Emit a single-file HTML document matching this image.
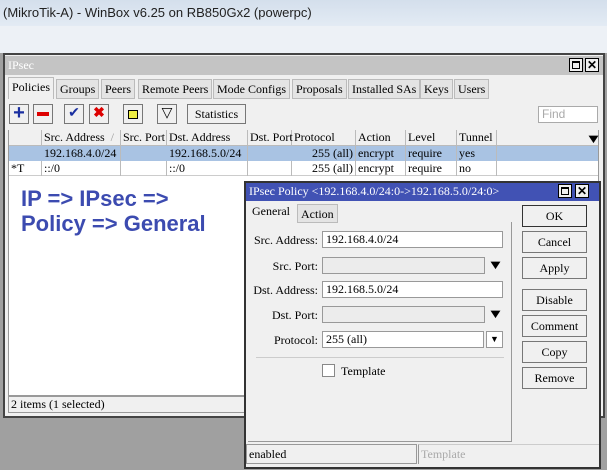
<!DOCTYPE html>
<html><head><style>
*{box-sizing:border-box;margin:0;padding:0}
body{width:607px;height:470px;overflow:hidden;background:#a0a0a0;font-family:"Liberation Serif",serif;font-size:12px;color:#000;position:relative}
.a{position:absolute}
.top{left:0;top:0;width:607px;height:26px;background:linear-gradient(#d4dfec,#e3ebf4)}
.top2{left:0;top:26px;width:607px;height:27px;background:#edf1f6}
.win{left:3px;top:53px;width:602px;height:365px;background:#f0f0f0;border:2px solid #444}
.tb{height:19px;background:#c4c4c4}
.btn{background:#f0f0f0;border:1px solid #777;text-align:center}
.tab{top:79px;height:20px;border:1px solid #bbb;background:#e4e4e4;padding:2px 3px 0;white-space:nowrap}
.cell{top:0;height:15px;border-right:1px solid #bbb;padding-left:2px;white-space:nowrap;line-height:15px}
.in{background:#fff;border:1px solid #999;height:17px;padding-left:3px;line-height:15px;font-size:12px}
.lab{width:90px;text-align:right;left:228px}
.db{left:522px;width:65px;height:22px;line-height:20px;border:1px solid #777;background:#f0f0f0;text-align:center}
.arr{font-size:13px;transform:scaleX(1.3)}
</style></head><body>
<div class="a top"></div>
<div class="a top2"></div>
<div class="a" style="left:3px;top:5px;font-family:'Liberation Sans',sans-serif;font-size:13px;color:#222">(MikroTik-A) - WinBox v6.25 on RB850Gx2 (powerpc)</div>
<div class="a win"></div>
<div class="a tb" style="left:5px;top:56px;width:598px"></div>
<div class="a" style="left:8px;top:58px;color:#fff">IPsec</div>
<div class="a btn" style="left:569px;top:58px;width:14px;height:14px;border:1px solid #000"><div style="margin:2px;width:8px;height:8px;border:1px solid #000;border-top-width:2px"></div></div>
<div class="a btn" style="left:585px;top:58px;width:14px;height:14px;border:1px solid #000;line-height:12px;font-weight:bold;font-family:'Liberation Sans'">✕</div>
<div class="a tab" style="left:8px;top:77px;height:22px;background:#f0f0f0;border-bottom:none">Policies</div>
<div class="a tab" style="left:56px">Groups</div>
<div class="a tab" style="left:101px">Peers</div>
<div class="a tab" style="left:138px">Remote Peers</div>
<div class="a tab" style="left:213px">Mode Configs</div>
<div class="a tab" style="left:292px">Proposals</div>
<div class="a tab" style="left:348px">Installed SAs</div>
<div class="a tab" style="left:420px">Keys</div>
<div class="a tab" style="left:454px">Users</div>
<div class="a btn" style="left:9px;top:104px;width:20px;height:20px;color:#1a2fa0;font-weight:bold;font-size:20px;line-height:17px;font-family:'Liberation Sans'">+</div>
<div class="a btn" style="left:33px;top:104px;width:20px;height:20px"><div style="margin:7px 3px;height:4px;background:#d00"></div></div>
<div class="a btn" style="left:64px;top:104px;width:20px;height:20px;color:#1a2fa0;font-size:14px;line-height:18px">✔</div>
<div class="a btn" style="left:89px;top:104px;width:20px;height:20px;color:#d00;font-size:14px;line-height:18px;font-weight:bold">✖</div>
<div class="a btn" style="left:123px;top:104px;width:20px;height:20px"><div style="margin:5px 4px;height:9px;background:#ee4;border:1px solid #000"></div></div>
<div class="a btn" style="left:157px;top:104px;width:20px;height:20px;font-size:14px;line-height:18px">▽</div>
<div class="a btn" style="left:187px;top:104px;width:59px;height:20px;line-height:18px">Statistics</div>
<div class="a" style="left:538px;top:106px;width:60px;height:17px;background:#fff;border:1px solid #aaa;color:#aaa;font-family:'Liberation Sans';font-size:12px;padding-left:3px">Find</div>
<div class="a" style="left:8px;top:130px;width:591px;height:266px;background:#fff;border:1px solid #999"></div>
<div class="a" style="left:9px;top:130px;width:589px;height:16px;background:#f0f0f0;border-bottom:1px solid #bbb">
<div class="a cell" style="left:0;width:33px"></div>
<div class="a cell" style="left:33px;width:79px">Src. Address &nbsp;<span style="color:#999">/</span></div>
<div class="a cell" style="left:112px;width:46px">Src. Port</div>
<div class="a cell" style="left:158px;width:81px">Dst. Address</div>
<div class="a cell" style="left:239px;width:44px">Dst. Port</div>
<div class="a cell" style="left:283px;width:64px">Protocol</div>
<div class="a cell" style="left:347px;width:50px">Action</div>
<div class="a cell" style="left:397px;width:51px">Level</div>
<div class="a cell" style="left:448px;width:40px">Tunnel</div>
<div class="a arr" style="left:578px;top:1px">▼</div>
</div>
<div class="a" style="left:9px;top:146px;width:589px;height:15px;background:#a9c3e3">
<div class="a cell" style="left:33px;width:79px">192.168.4.0/24</div>
<div class="a cell" style="left:158px;width:81px">192.168.5.0/24</div>
<div class="a cell" style="left:283px;width:64px;text-align:right;padding-right:2px">255 (all)</div>
<div class="a cell" style="left:347px;width:50px">encrypt</div>
<div class="a cell" style="left:397px;width:51px">require</div>
<div class="a cell" style="left:448px;width:40px">yes</div>
</div>
<div class="a" style="left:9px;top:161px;width:589px;height:15px;border-bottom:1px solid #ccc">
<div class="a cell" style="left:0;width:33px">*T</div>
<div class="a cell" style="left:33px;width:79px">::/0</div>
<div class="a cell" style="left:112px;width:46px"></div>
<div class="a cell" style="left:158px;width:81px">::/0</div>
<div class="a cell" style="left:239px;width:44px"></div>
<div class="a cell" style="left:283px;width:64px;text-align:right;padding-right:2px">255 (all)</div>
<div class="a cell" style="left:347px;width:50px">encrypt</div>
<div class="a cell" style="left:397px;width:51px">require</div>
<div class="a cell" style="left:448px;width:40px">no</div>
</div>
<div class="a" style="left:21px;top:186px;color:#3c4bb0;font-family:'Liberation Sans',sans-serif;font-weight:bold;font-size:22px;line-height:25px">IP =&gt; IPsec =&gt;<br>Policy =&gt; General</div>
<div class="a" style="left:8px;top:396px;width:591px;height:17px;border:1px solid #999;background:#f0f0f0;padding-left:2px;line-height:15px">2 items (1 selected)</div>

<div class="a" style="left:244px;top:181px;width:357px;height:288px;background:#f0f0f0;border:2px solid #333"></div>
<div class="a" style="left:246px;top:183px;width:353px;height:18px;background:#4152b4;color:#fff;padding-left:3px;line-height:17px">IPsec Policy &lt;192.168.4.0/24:0-&gt;192.168.5.0/24:0&gt;</div>
<div class="a btn" style="left:558px;top:184px;width:14px;height:14px;border:1px solid #000"><div style="margin:2px;width:8px;height:8px;border:1px solid #000;border-top-width:2px"></div></div>
<div class="a btn" style="left:575px;top:184px;width:14px;height:14px;border:1px solid #000;line-height:12px;font-weight:bold;font-family:'Liberation Sans'">✕</div>
<div class="a" style="left:248px;top:222px;width:264px;height:220px;border-right:1px solid #999;border-bottom:1px solid #999"></div>
<div class="a" style="left:252px;top:204px">General</div>
<div class="a tab" style="left:297px;top:204px;height:19px">Action</div>
<div class="a lab" style="top:233px">Src. Address:</div>
<div class="a in" style="left:322px;top:231px;width:181px">192.168.4.0/24</div>
<div class="a lab" style="top:259px">Src. Port:</div>
<div class="a in" style="left:322px;top:257px;width:163px;background:#ececec"></div>
<div class="a arr" style="left:489px;top:257px">▼</div>
<div class="a lab" style="top:283px">Dst. Address:</div>
<div class="a in" style="left:322px;top:281px;width:181px">192.168.5.0/24</div>
<div class="a lab" style="top:308px">Dst. Port:</div>
<div class="a in" style="left:322px;top:306px;width:163px;background:#ececec"></div>
<div class="a arr" style="left:489px;top:306px">▼</div>
<div class="a lab" style="top:333px">Protocol:</div>
<div class="a in" style="left:322px;top:331px;width:162px">255 (all)</div>
<div class="a in" style="left:486px;top:331px;width:17px;font-size:9px;text-align:center;padding:0">▼</div>
<div class="a" style="left:256px;top:357px;width:248px;border-top:1px solid #ccc"></div>
<div class="a" style="left:322px;top:364px;width:13px;height:13px;background:#fff;border:1px solid #888"></div>
<div class="a" style="left:341px;top:364px">Template</div>
<div class="a db" style="top:205px;border-color:#333">OK</div>
<div class="a db" style="top:231px">Cancel</div>
<div class="a db" style="top:257px">Apply</div>
<div class="a db" style="top:289px">Disable</div>
<div class="a db" style="top:315px">Comment</div>
<div class="a db" style="top:341px">Copy</div>
<div class="a db" style="top:367px">Remove</div>
<div class="a" style="left:246px;top:444px;width:171px;height:20px;border:1px solid #999;padding-left:2px;line-height:19px">enabled</div>
<div class="a" style="left:418px;top:444px;width:181px;height:20px;border-left:1px solid #999;border-top:1px solid #ccc;padding-left:2px;line-height:19px;color:#aaa">Template</div>
</body></html>
